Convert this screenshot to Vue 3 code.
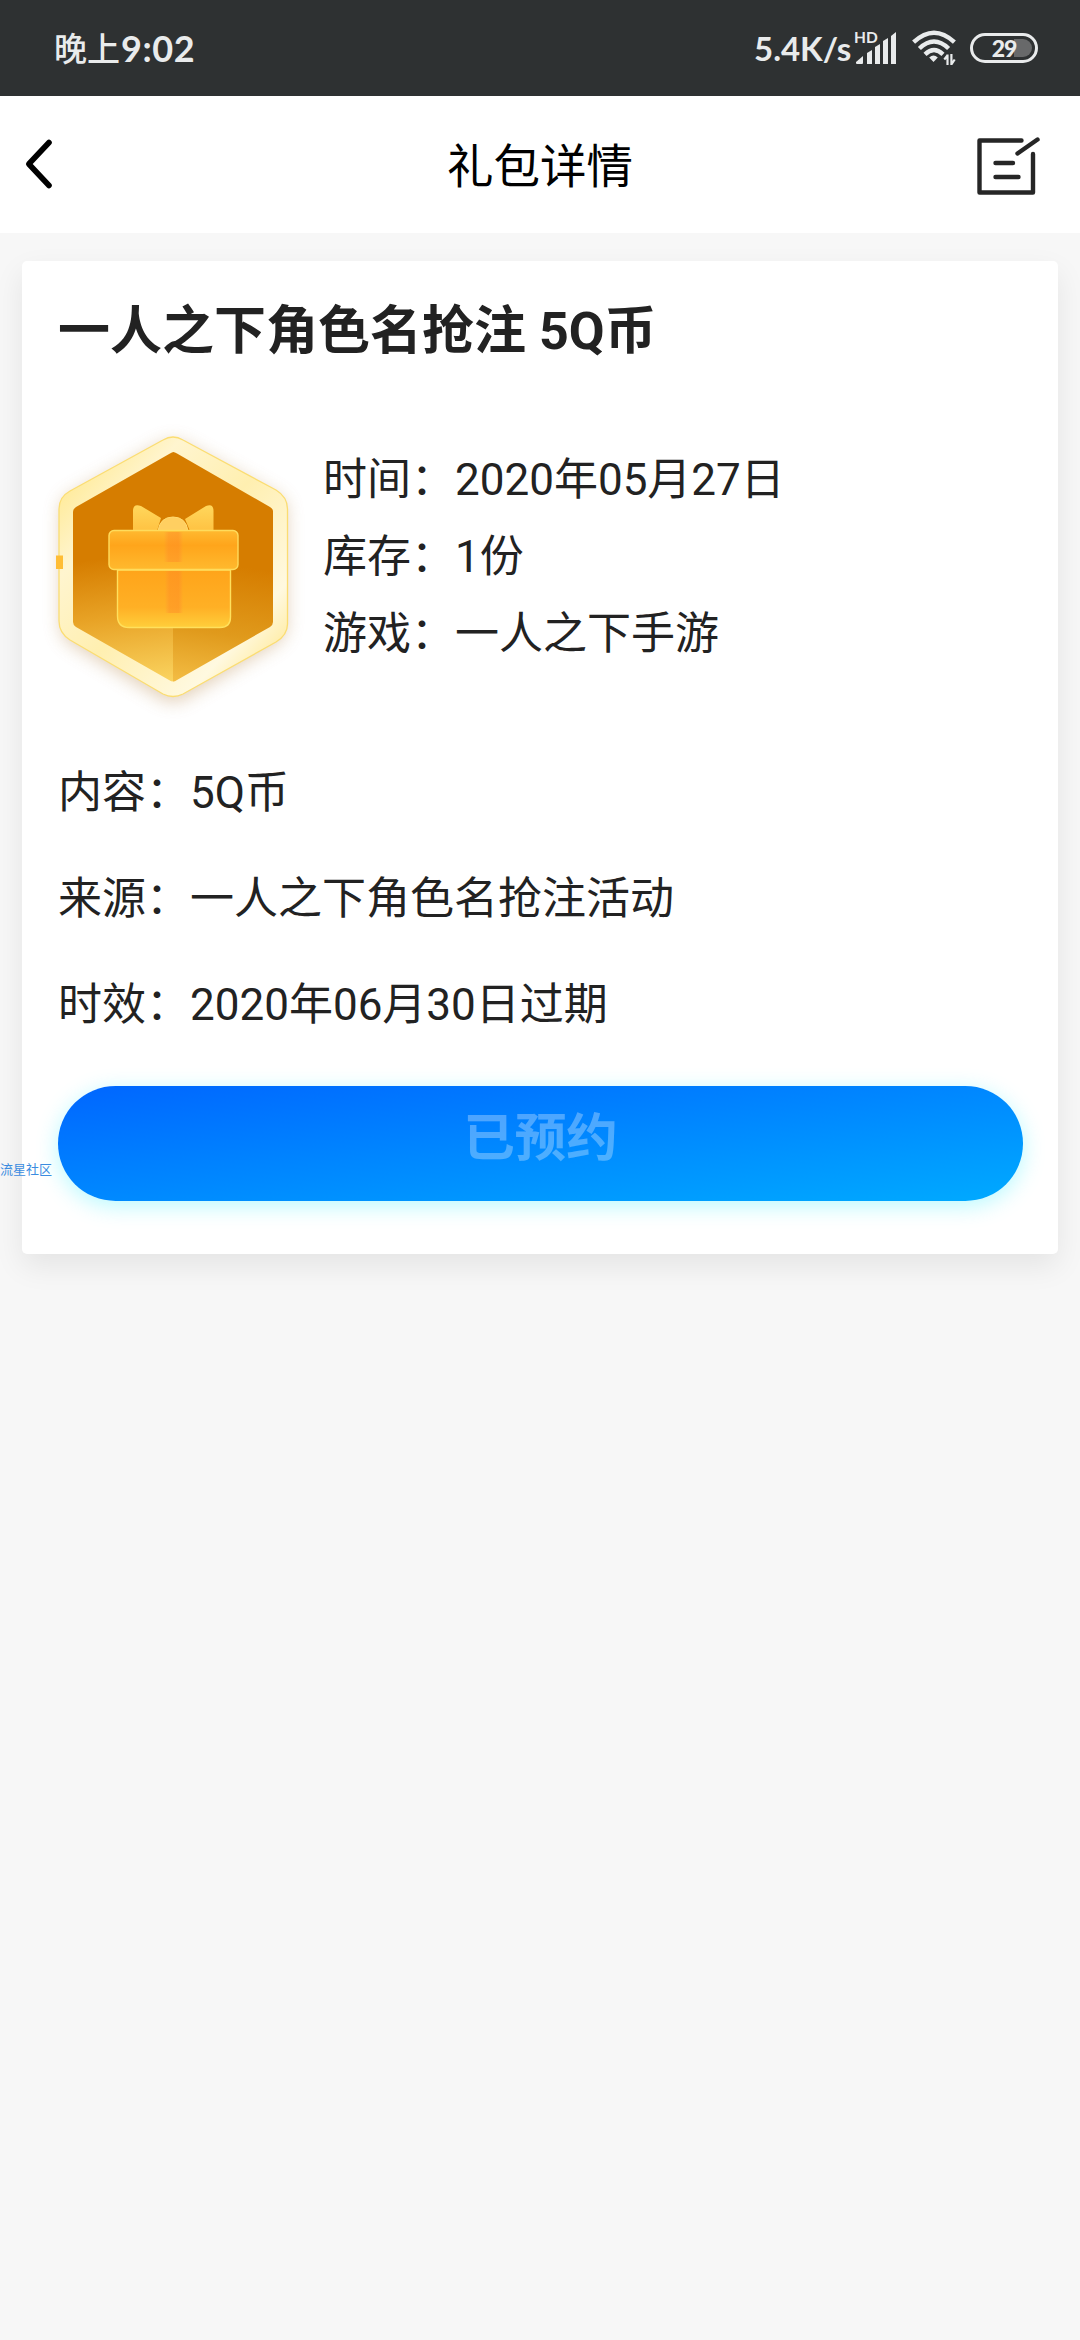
<script setup>
const facts = [
  { label: '时间', value: '2020年05月27日' },
  { label: '库存', value: '1份' },
  { label: '游戏', value: '一人之下手游' },
]
const details = [
  { label: '内容', value: '5Q币' },
  { label: '来源', value: '一人之下角色名抢注活动' },
  { label: '时效', value: '2020年06月30日过期' },
]
</script>

<template>
  <div class="screen">
    <div class="status">
      <div class="clock"><span class="cn">晚上</span><span class="digits">9:02</span></div>
      <div class="indicators">
        <span class="speed">5.4K/s</span>
        <div class="signal">
          <span class="hd">HD</span>
          <svg width="42" height="33" viewBox="0 0 42 33" fill="#e9ebec">
            <path d="M1 31v-1l7-6v7q0 1-1 1H2q-1 0-1-1z" />
            <path d="M12 21l5-3v14h-5z" />
            <path d="M20 15l5-3v20h-5z" />
            <path d="M28 9l5-3v26h-5z" />
            <path d="M36 4l5-4v32h-5z" />
          </svg>
        </div>
        <svg class="wifi" width="44" height="36" viewBox="0 0 44 36">
          <g fill="none" stroke="#e9ebec" stroke-width="4.4">
            <path d="M1.600 12.200Q22-6.700 42.400 12.200" />
            <path d="M7.400 18.500Q22 4.600 36.600 18.500" />
            <path d="M13 24.300Q22 15.800 31 24.300" />
          </g>
          <path d="M17.200 27.600Q21.500 23.600 25.800 27.600L21.500 32z" fill="#e9ebec" />
          <path d="M35.500 35V24.500M35.800 25l-3.500 4.500M39.400 24v11M39.400 34.500l3.300-5" stroke="#e9ebec" stroke-width="2.2" fill="none" />
        </svg>
        <div class="battery"><i class="fill"></i><b>29</b></div>
      </div>
    </div>

    <header class="bar">
      <svg class="back" width="32" height="54" viewBox="0 0 32 54" fill="none" stroke="#000" stroke-width="5.6" stroke-linecap="round" stroke-linejoin="round">
        <path d="M27 4.500L6.800 26L27 47.500" />
      </svg>
      <h1>礼包详情</h1>
      <svg width="66" height="62" viewBox="0 0 66 62" fill="none" stroke="#262626" stroke-width="4.400" stroke-linecap="round" stroke-linejoin="round">
        <path d="M45.500 6.500H3.500V58.500H57V20" />
        <path d="M61.500 5.500L41.500 19.500" />
        <path d="M19.500 29H37M19.500 43H42.500" />
      </svg>
    </header>

    <main class="card">
      <h2>一人之下角色名抢注 5Q币</h2>
      <div class="summary">
        <svg class="gift" width="290" height="310" viewBox="0 0 290 310">
          <defs>
            <linearGradient id="rim" x1="0" y1="0" x2="1" y2="1">
              <stop offset="0" stop-color="#ffe477" />
              <stop offset=".27" stop-color="#fff5cf" />
              <stop offset=".5" stop-color="#ffefb0" />
              <stop offset=".78" stop-color="#fff9e0" />
              <stop offset="1" stop-color="#ffe06e" />
            </linearGradient>
            <linearGradient id="left" gradientUnits="userSpaceOnUse" x1="100" y1="42" x2="130" y2="272">
              <stop offset=".44" stop-color="#d67d00" />
              <stop offset=".7" stop-color="#e8a326" />
              <stop offset="1" stop-color="#fad35f" />
            </linearGradient>
            <linearGradient id="right" gradientUnits="userSpaceOnUse" x1="200" y1="42" x2="165" y2="272">
              <stop offset=".48" stop-color="#d67d00" />
              <stop offset=".78" stop-color="#e09a1c" />
              <stop offset="1" stop-color="#f2bb42" />
            </linearGradient>
            <linearGradient id="lid" x1="0" y1="0" x2="0" y2="1">
              <stop offset="0" stop-color="#ffb930" />
              <stop offset=".38" stop-color="#ffa51b" />
              <stop offset="1" stop-color="#ffb92e" />
            </linearGradient>
            <linearGradient id="box" x1="0" y1="0" x2="0" y2="1">
              <stop offset="0" stop-color="#ffa41a" />
              <stop offset=".65" stop-color="#ffb025" />
              <stop offset="1" stop-color="#ffce3b" />
            </linearGradient>
            <linearGradient id="bow" x1="0" y1="0" x2="0" y2="1">
              <stop offset="0" stop-color="#ffd75c" />
              <stop offset="1" stop-color="#ffc242" />
            </linearGradient>
            <linearGradient id="ribbon">
              <stop offset="0" stop-color="#ff7d3c" stop-opacity="0" />
              <stop offset=".25" stop-color="#ff8528" stop-opacity=".38" />
              <stop offset=".75" stop-color="#ff8528" stop-opacity=".42" />
              <stop offset="1" stop-color="#ff7d3c" stop-opacity="0" />
            </linearGradient>
            <filter id="glow" x="-20%" y="-20%" width="140%" height="140%"><feGaussianBlur stdDeviation="9" /></filter>
          </defs>
          <path d="M133 34Q143 29 153 34L247 86Q256 90 256 104V216Q256 226 247 233L153 289Q143 294 133 289L40 233Q31 226 31 216V104Q31 90 40 86Z" fill="#b98a50" opacity=".42" filter="url(#glow)" />
          <path d="M133 30Q143 24 153 30L246 80Q257.500 87 257.500 99V214Q257.500 225 246 232L153 284Q143 289 133 284L40 230Q29 223 29 211V99Q29 87 40 81Z" fill="url(#rim)" stroke="#fbdd72" stroke-width="1.300" />
          <path d="M143.500 42Q142 42 140 43.500L46 97Q43 99 43 102V212Q43 215 46 217L139 270Q141 271.500 143.500 271.500Z" fill="url(#left)" />
          <path d="M143 42Q145 42 147 43.500L240 97Q243 99 243 101V212Q243 215 240 217L147 270Q145 271.500 143 271.500Z" fill="url(#right)" />
          <rect x="26" y="145.500" width="7" height="13.500" fill="#ffbd35" />
          <path d="M103 121V101Q103 93 111 96L131 108L127 121ZM183.500 121V101Q183.500 93 176 96L155 109L160 121Z" fill="url(#bow)" />
          <path d="M128 121Q130 107 143 107Q156 107 158 121Z" fill="#ffcf61" stroke="#ffda70" stroke-width="1" />
          <path d="M87.500 160H200.500V207Q200.500 217.500 190 217.500H99Q87.500 217.500 87.500 206Z" fill="url(#box)" stroke="#ffe05c" stroke-width="1.400" />
          <rect x="135" y="161" width="18" height="42" fill="url(#ribbon)" />
          <rect x="79" y="120.500" width="129" height="39" rx="5" fill="url(#lid)" stroke="#ffdc5c" stroke-width="1.400" />
          <rect x="134" y="122" width="19" height="30" fill="url(#ribbon)" />
        </svg>
        <div class="facts">
          <p v-for="f in facts" :key="f.label">{{ f.label }}：{{ f.value }}</p>
        </div>
      </div>
      <div class="details">
        <p v-for="d in details" :key="d.label">{{ d.label }}：{{ d.value }}</p>
      </div>
      <button class="reserve" disabled>已预约</button>
    </main>
    <span class="watermark">流星社区</span>
  </div>
</template>

<style>
body {
  background: #f7f7f7;
}
</style>

<style scoped>
.screen {
  position: relative;
  width: 1080px;
  height: 2340px;
  overflow: hidden;
  background: #f7f7f7;
  color: #222;
  font-family: Roboto, "Noto Sans CJK SC", sans-serif;
}
h1, h2, p {
  margin: 0;
}
svg {
  display: block;
  flex: none;
}
.status {
  box-sizing: border-box;
  height: 96px;
  padding: 0 42px 0 54px;
  display: flex;
  align-items: center;
  justify-content: space-between;
  background: #2e3132;
  color: #e9ebec;
  font-family: Lato, "Noto Sans CJK SC", sans-serif;
  white-space: nowrap;
}
.clock {
  display: flex;
  align-items: center;
  height: 96px;
}
.cn {
  font-size: 33px;
  font-weight: 500;
  line-height: 96px;
}
.digits {
  font-size: 36px;
  font-weight: 700;
  line-height: 96px;
  margin-left: 1px;
  letter-spacing: .6px;
}
.indicators {
  display: flex;
  align-items: center;
}
.speed {
  font-size: 33px;
  font-weight: 700;
  line-height: 96px;
  width: 101px;
}
.signal {
  position: relative;
  margin-right: 15px;
}
.hd {
  position: absolute;
  left: -1px;
  top: -3px;
  font-size: 15.5px;
  line-height: 16px;
  font-weight: 700;
}
.wifi {
  margin-right: 14px;
}
.battery {
  box-sizing: border-box;
  position: relative;
  width: 68px;
  height: 30px;
  border: 3px solid #e9ebec;
  border-radius: 15px;
  display: flex;
  align-items: center;
  justify-content: center;
  font-size: 23px;
}
.battery b {
  position: relative;
  font-weight: 900;
  letter-spacing: -1px;
}
.fill {
  position: absolute;
  right: 3px;
  top: 3px;
  width: 18px;
  height: 18px;
  border-radius: 0 9px 9px 0;
  background: #68696a;
}
.bar {
  box-sizing: border-box;
  height: 137px;
  padding: 0 38px 0 22px;
  display: flex;
  align-items: center;
  justify-content: space-between;
  background: #fff;
}
.bar h1 {
  margin-left: 50px;
  padding-top: 5px;
  color: #000;
  font-size: 46.500px;
  font-weight: 400;
  line-height: 60px;
}
.card {
  box-sizing: border-box;
  width: 1036px;
  height: 993px;
  margin: 28px 0 0 22px;
  padding: 36px 35px 53px 36px;
  display: flex;
  flex-direction: column;
  background: #fff;
  border-radius: 5px;
  box-shadow: 0 12px 30px rgba(0, 0, 0, .08);
}
.card h2 {
  font-size: 52px;
  font-weight: 700;
  line-height: 70px;
}
.summary {
  display: flex;
  margin: 43px 0 0 -28px;
}
.facts {
  padding-top: 32px;
  margin-left: 3px;
}
.facts p {
  font-size: 44px;
  line-height: 77px;
}
.details {
  margin-top: 20px;
}
.details p {
  font-size: 44px;
  line-height: 106px;
}
.reserve {
  height: 115px;
  margin-top: auto;
  padding: 0 0 9px;
  border: 0;
  border-radius: 58px;
  background: linear-gradient(to bottom right, #06f, #0af);
  box-shadow: 0 5px 22px rgba(0, 238, 255, .28);
  color: rgba(255, 255, 255, .3);
  font: 700 51.500px/70px Roboto, "Noto Sans CJK SC", sans-serif;
}
.watermark {
  position: absolute;
  left: 0;
  top: 1161px;
  color: #3b8ce0;
  font-size: 13px;
  line-height: 18px;
  font-weight: 400;
}
</style>
